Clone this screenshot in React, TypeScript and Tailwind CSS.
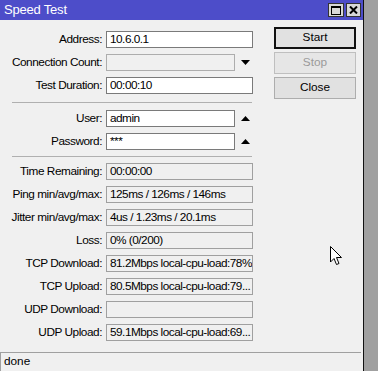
import React from 'react';

type FieldKind = 'edit' | 'disabled' | 'readonly';

const Field = ({ value = '', kind = 'readonly', narrow = false }: { value?: string; kind?: FieldKind; narrow?: boolean }) => {
  const tone =
    kind === 'edit'
      ? 'bg-white border-[#7a7a7a]'
      : kind === 'disabled'
      ? 'bg-[#f0f0f0] border-[#adadad]'
      : 'bg-[#f0f0f0] border-[#a0a0a0]';
  return (
    <div
      className={`${narrow ? 'w-[129px]' : 'w-[147px]'} h-[17px] border ${tone} px-[3px] leading-[15px] whitespace-nowrap overflow-hidden text-black tracking-[-0.5px]`}
    >
      {value}
    </div>
  );
};

const Arrow = ({ up = false }: { up?: boolean }) => (
  <svg width="9" height="5" viewBox="0 0 9 5" className="ml-[6px]">
    {up ? <polygon points="0,5 9,5 4.5,0" fill="#000" /> : <polygon points="0,0 9,0 4.5,5" fill="#000" />}
  </svg>
);

const Row = ({ label, children }: { label: string; children: React.ReactNode }) => (
  <div className="flex h-[23px] items-center">
    <div className="w-[102px] text-right whitespace-nowrap text-black tracking-[-0.45px]">{label}</div>
    <div className="ml-[4px] flex items-center">{children}</div>
  </div>
);

const Separator = ({ h }: { h: string }) => (
  <div className={`flex items-center ${h}`}>
    <div className="ml-[12px] w-[240px] h-px bg-[#b0b0b0]" />
  </div>
);

const Button = ({ label, primary = false, disabled = false }: { label: string; primary?: boolean; disabled?: boolean }) => (
  <div
    className={`h-[22px] w-[82px] flex items-center justify-center bg-[#e1e1e1] ${
      primary ? 'border-2 border-[#111]' : 'border border-[#adadad]'
    } ${disabled ? 'text-[#9a9a9a] bg-[#e6e6e6] border-[#bfbfbf]' : 'text-black'}`}
  >
    {label}
  </div>
);

export default function App() {
  return (
    <div className="relative flex w-[378px] h-[371px] overflow-hidden font-['Liberation_Sans',Arial,sans-serif] text-[11.8px]">
      <div className="w-[363px] h-full flex flex-col bg-[#f0f0f0]">
        {/* title bar */}
        <div className="h-[20px] bg-[#4d4dc9] flex items-center pl-[4px] pr-[2px]">
          <span className="text-white text-[13px] tracking-[-0.2px]">Speed Test</span>
          <div className="ml-auto flex gap-[2px] self-start mt-[3px]">
            <div className="w-[16px] h-[14px] bg-[#d8d8d8] border border-[#333] flex items-center justify-center">
              <div className="w-[10px] h-[9px] border border-black border-t-2" />
            </div>
            <div className="w-[15px] h-[14px] bg-[#d8d8d8] border border-[#333] flex items-center justify-center">
              <svg width="9" height="8" viewBox="0 0 9 8">
                <path d="M1 0.5 L8 7.5 M8 0.5 L1 7.5" stroke="#000" strokeWidth="2" />
              </svg>
            </div>
          </div>
        </div>

        {/* body */}
        <div className="flex flex-1">
          <div className="w-[274px] pt-[8px]">
            <Row label="Address:">
              <Field value="10.6.0.1" kind="edit" />
            </Row>
            <Row label="Connection Count:">
              <Field kind="disabled" narrow />
              <Arrow />
            </Row>
            <Row label="Test Duration:">
              <Field value="00:00:10" kind="edit" />
            </Row>
            <Separator h="h-[10px]" />
            <Row label="User:">
              <Field value="admin" kind="edit" narrow />
              <Arrow up />
            </Row>
            <Row label="Password:">
              <Field value="***" kind="edit" narrow />
              <Arrow up />
            </Row>
            <Separator h="h-[7px]" />
            <Row label="Time Remaining:">
              <Field value="00:00:00" />
            </Row>
            <Row label="Ping min/avg/max:">
              <Field value="125ms / 126ms / 146ms" />
            </Row>
            <Row label="Jitter min/avg/max:">
              <Field value="4us / 1.23ms / 20.1ms" />
            </Row>
            <Row label="Loss:">
              <Field value="0% (0/200)" />
            </Row>
            <Row label="TCP Download:">
              <Field value="81.2Mbps local-cpu-load:78%" />
            </Row>
            <Row label="TCP Upload:">
              <Field value="80.5Mbps local-cpu-load:79..." />
            </Row>
            <Row label="UDP Download:">
              <Field />
            </Row>
            <Row label="UDP Upload:">
              <Field value="59.1Mbps local-cpu-load:69..." />
            </Row>
          </div>
          <div className="pt-[7px] flex flex-col gap-[3px]">
            <Button label="Start" primary />
            <Button label="Stop" disabled />
            <Button label="Close" />
          </div>
        </div>

        {/* status bar */}
        <div className="h-[19px] w-[361px] border-t border-l border-[#a0a0a0] flex items-center pl-[3px] text-black">
          done
        </div>
      </div>
      <div className="w-px h-full bg-[#111]" />
      <div className="flex-1 h-full bg-[#a0a0a0]" />

      {/* mouse pointer */}
      <svg className="absolute left-[330px] top-[246px]" width="13" height="20" viewBox="0 0 13 20">
        <path
          d="M0.5 0.5 L0.5 16 L4 12.5 L6.5 18.5 L9 17.5 L6.5 11.5 L11.5 11.5 Z"
          fill="#fff"
          stroke="#000"
          strokeWidth="1"
          strokeLinejoin="miter"
        />
      </svg>
    </div>
  );
}
